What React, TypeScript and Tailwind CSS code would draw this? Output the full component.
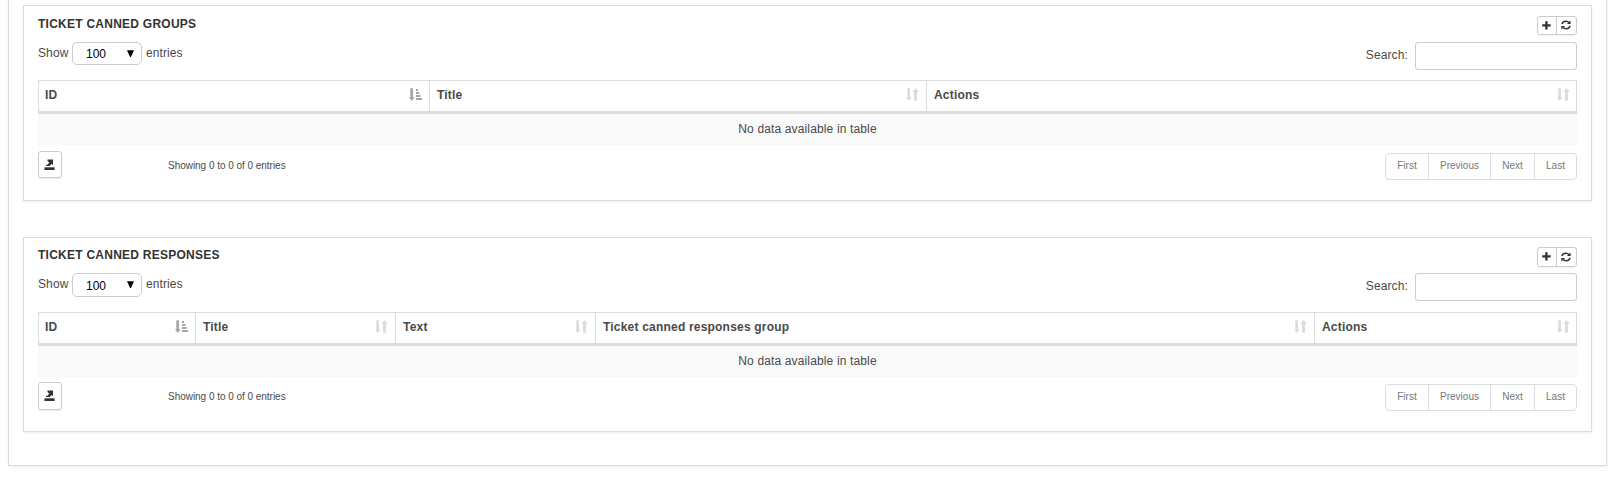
import React from 'react';

function SortAscIcon() {
  return (
    <svg className="shrink-0 text-[#a6a6a6]" width="13" height="13" viewBox="0 0 13 13" fill="currentColor">
      <path d="M1.3 0.3h2.7v9h1.6L2.8 13 0 9.3h1.3z" />
      <path d="M7 1h2v2H7zM7 4h3.4v2H7zM7 7h4.6v2H7zM7 10h6v2H7z" />
    </svg>
  );
}

function SortIcon() {
  return (
    <svg className="shrink-0 text-[#dcdcdc]" width="13" height="13" viewBox="0 0 13 13" fill="currentColor">
      <path d="M1.3 0.2H4v9h1.8L2.7 13 0 9.2h1.3z" />
      <path d="M8 12.8h3V4h2L9.6 0 6.2 4H8z" />
    </svg>
  );
}

function PlusIcon() {
  return (
    <svg width="9" height="9" viewBox="0 0 9 9" fill="currentColor">
      <path d="M3.2 0.3h2.4v2.9h3.1v2.4H5.6v3H3.2v-3H0.2V3.2h3z" />
    </svg>
  );
}

function RefreshIcon() {
  return (
    <svg width="10" height="10" viewBox="0 0 10 10" fill="none" stroke="currentColor" strokeWidth="1.5">
      <path d="M0.9 4C1.5 2.2 3 1.2 4.9 1.2c1.4 0 2.4 0.5 3.3 1.5M9.1 6C8.5 7.8 7 8.8 5.1 8.8c-1.4 0-2.4-0.5-3.3-1.5" />
      <path d="M9.6 0.4v3.7H5.9zM0.4 9.6V5.9h3.7z" fill="currentColor" stroke="none" />
    </svg>
  );
}

function ExportIcon() {
  return (
    <svg width="11" height="12" viewBox="0 0 11 12" fill="currentColor">
      <path d="M3.5 0.5H9V6.3L7.6 5 5.6 7H2V5.7h1.6L5.2 3.4 3.5 2z" />
      <path d="M0.4 8.3h10.2v2.7H0.4z" />
    </svg>
  );
}

type Column = { label: string; width: string };

const groupColumns: Column[] = [
  { label: 'ID', width: 'w-[392px]' },
  { label: 'Title', width: 'w-[497px]' },
  { label: 'Actions', width: 'w-[650px]' },
];

const responseColumns: Column[] = [
  { label: 'ID', width: 'w-[158px]' },
  { label: 'Title', width: 'w-[200px]' },
  { label: 'Text', width: 'w-[200px]' },
  { label: 'Ticket canned responses group', width: 'w-[719px]' },
  { label: 'Actions', width: 'w-[262px]' },
];

const pages: { label: string; width: string }[] = [
  { label: 'First', width: 'w-[43px]' },
  { label: 'Previous', width: 'w-[62px]' },
  { label: 'Next', width: 'w-[44px]' },
  { label: 'Last', width: 'w-[41px]' },
];

type PanelProps = { title: string; columns: Column[]; compact?: boolean };

function Panel({ title, columns, compact = false }: PanelProps) {
  return (
    <section
      className={`border border-[#ddd] bg-white px-[14px] shadow-[0_1px_2px_rgba(0,0,0,0.08)] ${compact ? 'h-[195px]' : 'h-[196px]'}`}
    >
      <header className={`flex justify-between ${compact ? 'h-[35px] pt-[9px]' : 'h-[36px] pt-[10px]'}`}>
        <h2 className="h-4 text-[12px] leading-4 font-bold tracking-[0.25px] text-[#333]">{title}</h2>
        <div
          className={`flex rounded-[3px] border border-[#ccc] text-[#333] shadow-[0_1px_1px_rgba(0,0,0,0.05)] ${compact ? 'h-5' : 'h-[19px]'}`}
        >
          <button aria-label="Add" className="flex w-[19px] items-center justify-center border-r border-[#ccc] pr-px pb-px">
            <PlusIcon />
          </button>
          <button aria-label="Refresh" className="flex w-[19px] items-center justify-center pr-px pb-px">
            <RefreshIcon />
          </button>
        </div>
      </header>

      <div className={`flex justify-between text-[12px] ${compact ? 'h-[39px]' : 'h-[38px]'}`}>
        <div className="flex">
          <span className="h-[22px] w-[34px] leading-[22px] tracking-[0.1px]">Show</span>
          <div
            className={`flex w-[70px] items-center justify-between rounded-[5px] border border-[#ccc] pr-[7px] pl-[13px] text-black ${compact ? 'h-6' : 'h-[23px]'}`}
          >
            <span className="scale-y-110 pt-px">100</span>
            <svg className="mb-px" width="7" height="7" viewBox="0 0 7 7" fill="currentColor">
              <path d="M0 0.2h7L3.9 7H3.1z" />
            </svg>
          </div>
          <span className="ml-1 h-[22px] leading-[22px] tracking-[0.1px]">entries</span>
        </div>
        <label className="flex h-7">
          <span className="mr-[7px] leading-[26px] tracking-[0.12px]">Search:</span>
          <input type="text" className="h-7 w-[162px] rounded-[3px] border border-[#ccc] bg-white px-2" />
        </label>
      </div>

      <div className="text-[12px]">
        <div className="flex h-[34px] border-b-[3px] border-[#ddd]">
          {columns.map((c, i) => (
            <div
              key={c.label}
              className={`flex items-start justify-between border-t border-r border-[#ddd] last:pr-[6px] ${i === 0 ? 'border-l pr-[7px] pl-[6px]' : 'pr-[7px] pl-[7px]'} ${c.width}`}
            >
              <span className="pt-[5px] leading-[18px] font-bold tracking-[0.2px]">{c.label}</span>
              <span className="flex pt-[7px]">{i === 0 ? <SortAscIcon /> : <SortIcon />}</span>
            </div>
          ))}
        </div>
        <div className="h-[31px] bg-[#f9f9f9] text-center leading-[31px] tracking-[0.14px]">No data available in table</div>
      </div>

      <footer className={`flex justify-between ${compact ? 'pt-[5px]' : 'pt-[6px]'}`}>
        <div className="flex text-[10px]">
          <button
            aria-label="Export"
            className={`flex w-6 items-center justify-center rounded-[3px] border border-[#ccc] pr-px text-[#333] shadow-[0_1px_1px_rgba(0,0,0,0.08)] ${compact ? 'h-7 pb-px' : 'h-[27px]'}`}
          >
            <ExportIcon />
          </button>
          <span className="ml-[106px] h-[30px] leading-[30px] tracking-[-0.03px]">Showing 0 to 0 of 0 entries</span>
        </div>
        <nav className="mt-[2px] flex h-[27px] w-[192px] overflow-hidden rounded-[4px] border border-[#ddd] text-[10px] text-[#777]">
          {pages.map((p) => (
            <button
              key={p.label}
              className={`shrink-0 border-r border-[#ddd] pb-[2px] text-center last:border-r-0 ${p.width}`}
            >
              {p.label}
            </button>
          ))}
        </nav>
      </footer>
    </section>
  );
}

export default function App() {
  return (
    <div className="h-[478px] w-[1610px] overflow-hidden bg-white pl-2 font-['Liberation_Sans',Arial,sans-serif] text-[#4a4a4a]">
      <main className="flex h-[466px] w-[1599px] flex-col gap-9 border border-t-0 border-[#ddd] px-[14px] pt-[5px] shadow-[0_1px_2px_rgba(0,0,0,0.08)]">
        <Panel title="TICKET CANNED GROUPS" columns={groupColumns} />
        <Panel title="TICKET CANNED RESPONSES" columns={responseColumns} compact />
      </main>
    </div>
  );
}
